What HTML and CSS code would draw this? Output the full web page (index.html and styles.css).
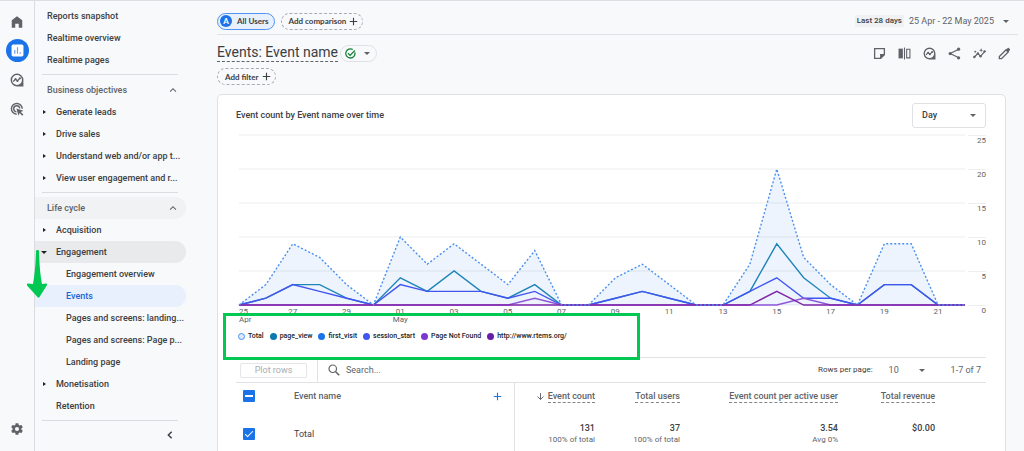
FILE: index.html
```html
<!DOCTYPE html>
<html lang="en">
<head>
    <meta charset="UTF-8">
    <meta name="viewport" content="width=device-width, initial-scale=1.0">
    <title>Events: Event name</title>
    <link rel="stylesheet" href="styles.css">
</head>
<body>
    <!-- Icon sprite -->
    <svg class="sprite" aria-hidden="true">
        <symbol id="i-home" viewBox="0 0 24 24"><path d="M3 22V9l9-7 9 7v13h-6v-7H9v7z"/></symbol>
        <symbol id="i-explore" viewBox="0 0 24 24">
            <path d="M12 1a11 11 0 1 0 0 22h11V12A11 11 0 0 0 12 1zm0 2.500a8.500 8.500 0 1 1 0 17 8.500 8.500 0 0 1 0-17z"/>
            <path d="M5.500 14.500l4-4 3 3 5-5" fill="none" stroke="currentColor" stroke-width="2.200"/>
            <circle cx="9.500" cy="10.500" r="1.800"/><circle cx="12.800" cy="13.600" r="1.800"/><circle cx="17" cy="9" r="1.800"/>
        </symbol>
        <symbol id="i-ads" viewBox="0 0 24 24">
            <path d="M21 11.500A9.300 9.300 0 1 0 11.500 21M16.700 11A5.200 5.200 0 1 0 11 16.700" fill="none" stroke="currentColor" stroke-width="2.500"/>
            <path d="M11 11l12 4-4.500 2 4.500 4.500-2 2-4.500-4.500-2 4.500z"/>
        </symbol>
        <symbol id="i-gear" viewBox="0 0 24 24"><path d="M19.430 12.980c.04-.32.07-.64.07-.98s-.03-.66-.07-.98l2.110-1.650c.19-.15.24-.42.12-.64l-2-3.460c-.12-.22-.39-.3-.61-.22l-2.490 1c-.52-.4-1.080-.73-1.690-.98l-.38-2.650A.49.49 0 0 0 14 2h-4c-.25 0-.46.18-.49.42l-.38 2.650c-.61.25-1.170.59-1.690.98l-2.490-1c-.23-.09-.49 0-.61.22l-2 3.460c-.13.22-.07.49.12.64l2.110 1.650c-.04.32-.07.65-.07.98s.03.66.07.98l-2.110 1.650c-.19.15-.24.42-.12.64l2 3.460c.12.22.39.3.61.22l2.490-1c.52.4 1.080.73 1.690.98l.38 2.650c.03.24.24.42.49.42h4c.25 0 .46-.18.49-.42l.38-2.650c.61-.25 1.170-.59 1.690-.98l2.490 1c.23.09.49 0 .61-.22l2-3.460c.12-.22.07-.49-.12-.64zM12 15.500a3.500 3.500 0 1 1 0-7 3.500 3.500 0 0 1 0 7z"/></symbol>
        <symbol id="i-up" viewBox="0 0 24 24"><path d="M5 16l7-7 7 7" fill="none" stroke="currentColor" stroke-width="2.500"/></symbol>
        <symbol id="i-left" viewBox="0 0 24 24"><path d="M16 4l-8 8 8 8" fill="none" stroke="currentColor" stroke-width="3.500"/></symbol>
        <symbol id="i-plus" viewBox="0 0 24 24"><path d="M12 2v20M2 12h20" fill="none" stroke="currentColor" stroke-width="3"/></symbol>
        <symbol id="i-check" viewBox="0 0 24 24"><path d="M21.500 9.500A10 10 0 1 1 17 3.300M6.500 11.500l4.500 4.500L21.500 5.500" fill="none" stroke="currentColor" stroke-width="2.800"/></symbol>
        <symbol id="i-note" viewBox="0 0 24 24"><path d="M3 3h18v11l-7 7H3z" fill="none" stroke="currentColor" stroke-width="2.400"/><path d="M13 13h8v2l-6 6h-2z"/></symbol>
        <symbol id="i-compare" viewBox="0 0 24 24"><path d="M1 3h8v18H1z"/><path d="M12 1v22" stroke="currentColor" stroke-width="2"/><path d="M16 4h6v16h-6z" fill="none" stroke="currentColor" stroke-width="2"/></symbol>
        <symbol id="i-share" viewBox="0 0 24 24"><path d="M19 4.500L4 12l15 7.500" fill="none" stroke="currentColor" stroke-width="2.200"/><circle cx="19.500" cy="4" r="3"/><circle cx="4" cy="12" r="3"/><circle cx="19.500" cy="20" r="3"/></symbol>
        <symbol id="i-insights" viewBox="0 0 24 24"><path d="M2 19l7-7 5 5 8-9" fill="none" stroke="currentColor" stroke-width="2.200"/><circle cx="2.500" cy="18.500" r="2.200"/><circle cx="9" cy="12" r="2.200"/><circle cx="14" cy="17" r="2.200"/><circle cx="21.500" cy="8" r="2.200"/><path d="M15 2l1 3 3 1-3 1-1 3-1-3-3-1 3-1zM4 6l.8 2 2 .8-2 .8-.8 2-.8-2-2-.8 2-.8z"/></symbol>
        <symbol id="i-edit" viewBox="0 0 24 24"><path d="M2.500 21.500v-4L15 5l4 4L6.500 21.500z" fill="none" stroke="currentColor" stroke-width="2.400"/><path d="M14 6l4-4q1-1 2 0l2 2q1 1 0 2l-4 4z"/></symbol>
        <symbol id="i-search" viewBox="0 0 24 24"><circle cx="9.500" cy="9.500" r="7.500" fill="none" stroke="currentColor" stroke-width="2.400"/><path d="M15 15l7.500 7.500" stroke="currentColor" stroke-width="3"/></symbol>
        <symbol id="i-down-arrow" viewBox="0 0 24 24"><path d="M12 3v17M4 12l8 8 8-8" fill="none" stroke="currentColor" stroke-width="2.500"/></symbol>
    </svg>

    <div class="app">
        <nav class="rail" aria-label="Sections">
            <a class="rail-item" href="#" aria-label="Home"><svg><use href="#i-home"/></svg></a>
            <a class="rail-item active" href="#" aria-label="Reports">
                <svg viewBox="0 0 24 24"><rect x="1" y="1" width="22" height="22" rx="3" fill="#fff"/><path d="M7 18v-7M12 18V6M17 18v-3" stroke="#6f9df0" stroke-width="2.200"/></svg>
            </a>
            <a class="rail-item" href="#" aria-label="Explore"><svg><use href="#i-explore"/></svg></a>
            <a class="rail-item" href="#" aria-label="Advertising"><svg><use href="#i-ads"/></svg></a>
            <a class="rail-item rail-admin" href="#" aria-label="Admin"><svg><use href="#i-gear"/></svg></a>
        </nav>

        <nav class="sidebar" aria-label="Reports">
            <a class="nav-item" href="#">Reports snapshot</a>
            <a class="nav-item" href="#">Realtime overview</a>
            <a class="nav-item" href="#">Realtime pages</a>
            <hr class="nav-divider">
            <button class="nav-group">Business objectives <svg><use href="#i-up"/></svg></button>
            <a class="nav-item parent" href="#">Generate leads</a>
            <a class="nav-item parent" href="#">Drive sales</a>
            <a class="nav-item parent" href="#">Understand web and/or app t...</a>
            <a class="nav-item parent" href="#">View user engagement and r...</a>
            <hr class="nav-divider">
            <button class="nav-group hovered">Life cycle <svg><use href="#i-up"/></svg></button>
            <a class="nav-item parent" href="#">Acquisition</a>
            <a class="nav-item parent open" href="#">Engagement</a>
            <a class="nav-item child" href="#">Engagement overview</a>
            <a class="nav-item child selected" href="#">Events</a>
            <a class="nav-item child" href="#">Pages and screens: landing...</a>
            <a class="nav-item child" href="#">Pages and screens: Page p...</a>
            <a class="nav-item child" href="#">Landing page</a>
            <a class="nav-item parent" href="#">Monetisation</a>
            <a class="nav-item leaf" href="#">Retention</a>
            <hr class="nav-divider">
            <button class="nav-collapse" aria-label="Collapse menu"><svg><use href="#i-left"/></svg></button>
            <svg class="arrow-mark" viewBox="0 0 20 48" aria-hidden="true"><path d="M10.500 0c1 0 1.500.5 1.500 1.500q.5 20 3 32.500 2-.5 4.500-.5 1 .5.500 1.500L12.500 47q-1 1.500-2 0L0 35.500q-.5-1.500.5-2 3 0 5.500.5Q8.500 20 9 1.500C9 .5 9.500 0 10.500 0z"/></svg>
        </nav>

        <main class="main">
            <div class="topbar">
                <button class="chip chip-active"><span class="avatar">A</span>All Users</button>
                <button class="chip">Add comparison <svg><use href="#i-plus"/></svg></button>
                <button class="date-range"><span class="date-tag">Last 28 days</span>25 Apr - 22 May 2025<span class="caret"></span></button>
            </div>

            <div class="title-row">
                <h1>Events: Event name</h1>
                <button class="status" aria-label="Data quality"><svg><use href="#i-check"/></svg><span class="caret"></span></button>
                <div class="actions">
                    <button aria-label="Notes"><svg><use href="#i-note"/></svg></button>
                    <button aria-label="Compare"><svg><use href="#i-compare"/></svg></button>
                    <button aria-label="Explore"><svg><use href="#i-explore"/></svg></button>
                    <button aria-label="Share"><svg><use href="#i-share"/></svg></button>
                    <button aria-label="Insights"><svg><use href="#i-insights"/></svg></button>
                    <button aria-label="Edit"><svg><use href="#i-edit"/></svg></button>
                </div>
            </div>
            <button class="chip">Add filter <svg><use href="#i-plus"/></svg></button>

            <section class="card">
                <div class="card-header">
                    <h2>Event count by Event name over time</h2>
                    <div class="select-box">
                        <select aria-label="Interval"><option>Day</option><option>Week</option><option>Month</option></select>
                        <span class="caret"></span>
                    </div>
                </div>

                <div class="chart">
                    <div class="plot">
                        <!-- x: days since 25 Apr, y: 25 minus the event count -->
                        <svg class="plot-svg" viewBox="0 0 27 25" preserveAspectRatio="none" role="img" aria-label="Event count per day">
                            <path class="grid" d="M0 0H27M0 5H27M0 10H27M0 15H27M0 20H27M0 25H27"/>
                            <polygon class="area" points="0,25 1,22 2,16 3,18 4,22 5,25 6,15 7,19 8,16 9,19 10,22 11,17 12,25 13,25 14,21 15,19 16,22 17,25 18,25 19,19 20,5 21,18 22,22 23,25 24,16 25,16 26,25"/>
                            <polyline class="page-view" points="0,25 1,24 2,22 3,22 4,24 5,25 6,21 7,23 8,20 9,23 10,24 11,22 12,25 13,25 14,24 15,23 16,24 17,25 18,25 19,23 20,16 21,21 22,24 23,25 24,22 25,22 26,25 27,25"/>
                            <polyline class="session" points="0,25 1,24 2,22 3,23 4,24 5,25 6,22 7,23 8,23 9,23 10,24 11,23 12,25 13,25 14,24 15,23 16,24 17,25 18,25 19,23 20,21 21,24 22,24 23,25 24,22 25,22 26,25 27,25"/>
                            <polyline class="not-found" points="0,25 10,25 11,24 12,25 20,25 21,24 22,25 27,25"/>
                            <polyline class="rtems" points="0,25 19,25 20,23 21,25 27,25"/>
                            <polyline class="total" points="0,25 1,22 2,16 3,18 4,22 5,25 6,15 7,19 8,16 9,19 10,22 11,17 12,25 13,25 14,21 15,19 16,22 17,25 18,25 19,19 20,5 21,18 22,22 23,25 24,16 25,16 26,25 27,25"/>
                        </svg>
                        <div class="x-axis">
                            <span>25<br>Apr</span><span>27</span><span>29</span><span>01<br>May</span><span>03</span><span>05</span><span>07</span><span>09</span><span>11</span><span>13</span><span>15</span><span>17</span><span>19</span><span>21</span>
                        </div>
                    </div>
                    <div class="y-axis">
                        <span>25</span><span>20</span><span>15</span><span>10</span><span>5</span><span>0</span>
                    </div>
                </div>

                <div class="legend">
                    <span class="key key-total">Total</span>
                    <span class="key key-page-view">page_view</span>
                    <span class="key key-first-visit">first_visit</span>
                    <span class="key key-session">session_start</span>
                    <span class="key key-not-found">Page Not Found</span>
                    <span class="key key-rtems">http://www.rtems.org/</span>
                </div>
                <div class="highlight"></div>

                <div class="toolbar">
                    <div class="toolbar-plot"><button class="plot-rows" disabled>Plot rows</button></div>
                    <label class="search"><svg><use href="#i-search"/></svg><input type="text" placeholder="Search..." aria-label="Search"></label>
                    <label class="rows-label" for="rows">Rows per page:</label>
                    <div class="rows-select">
                        <select id="rows"><option>10</option><option>25</option><option>50</option></select>
                        <span class="caret"></span>
                    </div>
                    <span class="range">1-7 of 7</span>
                </div>

                <table class="events">
                    <colgroup>
                        <col class="col-check"><col><col class="col-count"><col class="col-users"><col class="col-per-user"><col class="col-revenue">
                    </colgroup>
                    <thead>
                        <tr>
                            <th><input type="checkbox" class="box partial" aria-label="Select all" checked></th>
                            <th class="name"><div class="name-head">Event name <button aria-label="Add dimension"><svg><use href="#i-plus"/></svg></button></div></th>
                            <th><svg class="sort"><use href="#i-down-arrow"/></svg><span class="metric">Event count</span></th>
                            <th><span class="metric">Total users</span></th>
                            <th><span class="metric">Event count per active user</span></th>
                            <th class="last"><span class="metric">Total revenue</span></th>
                        </tr>
                    </thead>
                    <tbody>
                        <tr>
                            <td><input type="checkbox" class="box" aria-label="Plot total" checked></td>
                            <td class="name">Total</td>
                            <td><strong>131</strong><small>100% of total</small></td>
                            <td><strong>37</strong><small>100% of total</small></td>
                            <td><strong>3.54</strong><small>Avg 0%</small></td>
                            <td class="last"><strong>$0.00</strong><small>&nbsp;</small></td>
                        </tr>
                    </tbody>
                </table>
            </section>
        </main>
    </div>
</body>
</html>
```
FILE: styles.css
```css
*,
*::before,
*::after {
    margin: 0;
    padding: 0;
    box-sizing: border-box;
}

body {
    font-family: Roboto, sans-serif;
    font-size: 9px;
    line-height: 12px;
    color: #3c4043;
    background: #f8f9fb;
}

button,
input,
select {
    font: inherit;
    color: inherit;
    background: none;
    border: none;
}

button {
    cursor: pointer;
}

a {
    color: inherit;
    text-decoration: none;
}

svg {
    fill: currentColor;
    flex: none;
}

.sprite {
    display: none;
}

.caret {
    border: 3px solid transparent;
    border-top-color: #5f6368;
    border-bottom: none;
    pointer-events: none;
}

.app {
    display: flex;
    height: 100vh;
    overflow: hidden;
    border-top: 1px solid #dcdee1;
}

/* Icon rail */
.rail {
    display: flex;
    flex-direction: column;
    align-items: center;
    gap: 6px;
    width: 35px;
    padding: 9px 0 11px;
    border-right: 1px solid #dadce0;
    color: #5f6368;
}

.rail-item {
    display: flex;
    align-items: center;
    justify-content: center;
    width: 23px;
    height: 23px;
    border-radius: 50%;
}

.rail-item svg {
    width: 14px;
    height: 14px;
}

.rail-item.active {
    background: #1a73e8;
}

.rail-item.active svg {
    width: 13px;
    height: 13px;
}

.rail-admin {
    margin-top: auto;
}

/* Report navigation */
.sidebar {
    position: relative;
    width: 151px;
    padding-top: 4px;
    font-weight: 500;
}

.nav-item,
.nav-group {
    display: block;
    width: 100%;
    height: 22px;
    padding: 0 0 0 12px;
    line-height: 22px;
    text-align: left;
    white-space: nowrap;
    border-radius: 0 11px 11px 0;
}

.nav-group {
    display: flex;
    align-items: center;
    justify-content: space-between;
    padding-right: 8px;
    color: #5f6368;
}

.nav-group.hovered {
    background: #f0f2f3;
}

.nav-group svg {
    width: 10px;
    height: 10px;
}

.nav-item.parent::before {
    content: "";
    display: inline-block;
    width: 3px;
    margin: 0 10px 0 -4px;
    border: 2px solid transparent;
    border-left: 3px solid #202124;
    border-right: none;
    vertical-align: 1px;
}

.nav-item.open {
    background: #e8eaeb;
}

.nav-item.open::before {
    width: 6px;
    margin: 0 9px 0 -6px;
    border: 3px solid transparent;
    border-top-color: #202124;
    border-bottom: none;
}

.nav-item.leaf {
    padding-left: 21px;
}

.nav-item.child {
    padding-left: 31px;
}

.nav-item.selected {
    color: #1967d2;
    background: #e8f0fe;
}

.nav-divider {
    margin: 3px 8px 4px 7px;
    border: none;
    border-top: 1px solid #dadce0;
}

.nav-collapse {
    display: flex;
    margin: 9px 11px 0 auto;
}

.nav-collapse svg {
    width: 10px;
    height: 10px;
}

.arrow-mark {
    position: absolute;
    top: 249px;
    left: -8px;
    width: 20px;
    height: 48px;
    fill: #00c853;
}

/* Main column */
.main {
    flex: 1;
    min-width: 0;
    padding: 0 6px 0 31px;
}

.topbar {
    display: flex;
    align-items: center;
    gap: 6px;
    height: 34px;
    padding-top: 7px;
    border-bottom: 1px solid #e0e2e5;
}

.chip {
    display: flex;
    align-items: center;
    gap: 3px;
    height: 17px;
    padding: 0 4px 0 7px;
    border: 1px dashed #a8abaf;
    border-radius: 9px;
    font-family: Lato, Roboto, sans-serif;
    font-size: 8px;
    font-weight: 700;
}

.chip svg {
    width: 9px;
    height: 9px;
}

.chip-active {
    gap: 5px;
    padding: 0 5px 0 2px;
    border: 1px solid #4f93f2;
    background: #e8f0fe;
}

.avatar {
    width: 12px;
    height: 12px;
    border-radius: 50%;
    background: #1a73e8;
    color: #fff;
}

.date-range {
    display: flex;
    align-items: center;
    gap: 5px;
    margin-left: auto;
    padding-right: 9px;
    color: #5f6368;
}

.date-range .caret {
    margin-left: 4px;
}

.date-tag {
    padding: 0 2px;
    background: #f0f1f3;
    color: #3c4043;
    font-size: 8px;
    font-weight: 500;
}

.title-row {
    display: flex;
    align-items: center;
    gap: 2px;
    height: 33px;
    padding-top: 3px;
}

h1 {
    border-bottom: 1px dashed #5f6368;
    font-size: 14px;
    font-weight: 400;
    line-height: 17px;
}

.status {
    display: flex;
    align-items: center;
    gap: 8px;
    height: 17px;
    padding: 0 6px 0 4px;
    border: 1px solid #dfe1e5;
    border-radius: 9px;
    color: #188038;
}

.status svg {
    width: 11px;
    height: 11px;
}

.actions {
    display: flex;
    gap: 12px;
    margin-left: auto;
    padding-right: 7px;
    color: #5f6368;
}

.actions button {
    display: flex;
}

.actions svg {
    width: 13px;
    height: 13px;
}

.card {
    position: relative;
    margin: 9px 12px 0 0;
    padding: 0 19px 0 18px;
    border: 1px solid #dfe1e5;
    border-radius: 5px;
    background: #fff;
}

.card-header {
    display: flex;
    align-items: center;
    justify-content: space-between;
    height: 40px;
}

h2 {
    font-size: 9px;
    font-weight: 500;
}

.select-box,
.rows-select {
    display: flex;
    align-items: center;
}

.select-box select,
.rows-select select {
    appearance: none;
    width: 100%;
}

.select-box {
    width: 74px;
    height: 25px;
    padding: 0 9px;
    border: 1px solid #dfe1e5;
    border-radius: 3px;
    font-weight: 500;
}

/* Chart */
.chart {
    display: flex;
    gap: 3px;
    height: 188px;
    padding-left: 3px;
    color: #5f6368;
    font-size: 8px;
}

.plot {
    flex: 1;
    min-width: 0;
}

.plot-svg {
    display: block;
    width: 100%;
    height: 170px;
    overflow: visible;
    fill: none;
}

.plot-svg * {
    vector-effect: non-scaling-stroke;
    stroke-width: 1px;
}

.plot-svg .grid {
    stroke: #eceef0;
}

.plot-svg .area {
    fill: #1a73e8;
    fill-opacity: 0.08;
}

.plot-svg polyline {
    stroke-width: 1.4px;
}

.plot-svg .page-view {
    stroke: #1f85b8;
}

.plot-svg .session {
    stroke: #4355f0;
}

.plot-svg .not-found {
    stroke: #8f55d8;
}

.plot-svg .rtems {
    stroke: #8024a8;
}

.plot-svg .total {
    stroke: #4a90f0;
    stroke-dasharray: 2 2;
}

.x-axis {
    display: flex;
    margin: 3px 0 0 calc(100% / -27);
    line-height: 8px;
    text-align: center;
}

.x-axis span {
    flex: 0 0 calc(100% / 14);
}

.x-axis span:first-child {
    padding-left: calc(100% / 28);
    text-align: left;
}

.y-axis {
    width: 18px;
    text-align: right;
}

.y-axis span {
    display: block;
    height: 34px;
    border-top: 1px solid #eceef0;
    line-height: 9px;
}

.legend {
    display: flex;
    gap: 6px;
    margin: 7px 0 15px 2px;
    color: #202124;
    font-size: 7px;
    font-weight: 500;
}

.key {
    display: flex;
    align-items: center;
    gap: 3px;
}

.key::before {
    content: "";
    width: 7px;
    height: 7px;
    border-radius: 50%;
    background: #1a73e8;
}

.key-total::before {
    border: 1px solid #4a90f0;
    background: #dce9fc;
}

.key-page-view::before {
    background: #0b78b0;
}

.key-session::before {
    background: #4355f0;
}

.key-not-found::before {
    background: #7a38d0;
}

.key-rtems::before {
    background: #681da8;
}

/* Frame around the legend */
.highlight {
    position: absolute;
    top: 218px;
    left: 5px;
    width: 417px;
    height: 47px;
    border: 3px solid #00c853;
    z-index: 1;
}

/* Table */
.toolbar {
    display: flex;
    align-items: center;
    height: 26px;
    border-top: 1px solid #dfe1e5;
    border-bottom: 1px solid #dfe1e5;
    color: #5f6368;
}

.toolbar-plot {
    display: flex;
    align-items: center;
    height: 100%;
    padding: 0 10px 0 4px;
    border-right: 1px solid #dfe1e5;
}

.plot-rows {
    width: 67px;
    height: 15px;
    border: 1px solid #e3e5e8;
    border-radius: 2px;
    color: #a9acb0;
}

.search {
    display: flex;
    flex: 1;
    align-items: center;
    gap: 6px;
    padding-left: 10px;
}

.search svg {
    width: 12px;
    height: 12px;
}

.search input {
    flex: 1;
    min-width: 0;
}

.search input::placeholder {
    color: #5f6368;
}

.rows-label {
    color: #3c4043;
    font-size: 8px;
}

.rows-select {
    width: 36px;
    margin: 0 26px 0 16px;
}

.range {
    padding-right: 5px;
}

.events {
    width: 100%;
    table-layout: fixed;
    border-collapse: collapse;
    text-align: right;
}

.col-check {
    width: 58px;
}

.col-count {
    width: 81px;
}

.col-users {
    width: 85px;
}

.col-per-user {
    width: 158px;
}

.col-revenue {
    width: 148px;
}

.events th {
    height: 26px;
    color: #5f6368;
    font-weight: 500;
    white-space: nowrap;
}

.events td {
    height: 50px;
}

.events th:first-child,
.events td:first-child {
    padding-left: 7px;
    text-align: left;
}

.events .name {
    border-right: 1px solid #dfe1e5;
    text-align: left;
}

.events .last {
    padding-right: 51px;
}

.name-head {
    display: flex;
    align-items: center;
    justify-content: space-between;
    padding-right: 12px;
}

.name-head button {
    display: flex;
    color: #1a73e8;
}

.name-head svg,
.sort {
    width: 9px;
    height: 9px;
}

.sort {
    margin-right: 3px;
    vertical-align: middle;
}

.metric {
    display: inline-block;
    border-bottom: 1px dashed #80868b;
}

.events strong,
.events small {
    display: block;
    font-size: 9px;
    font-weight: 500;
}

.events small {
    color: #5f6368;
    font-size: 8px;
    font-weight: 400;
}

.box {
    display: block;
    position: relative;
    appearance: none;
    width: 12px;
    height: 12px;
    border-radius: 1px;
    background: #1a73e8;
}

.box:checked::after {
    content: "";
    position: absolute;
    top: 3px;
    left: 2px;
    width: 8px;
    height: 4px;
    border: solid #fff;
    border-width: 0 0 1px 1px;
    transform: rotate(-45deg);
}

.box.partial::after {
    top: 5px;
    height: 2px;
    border: none;
    background: #fff;
    transform: none;
}
```
